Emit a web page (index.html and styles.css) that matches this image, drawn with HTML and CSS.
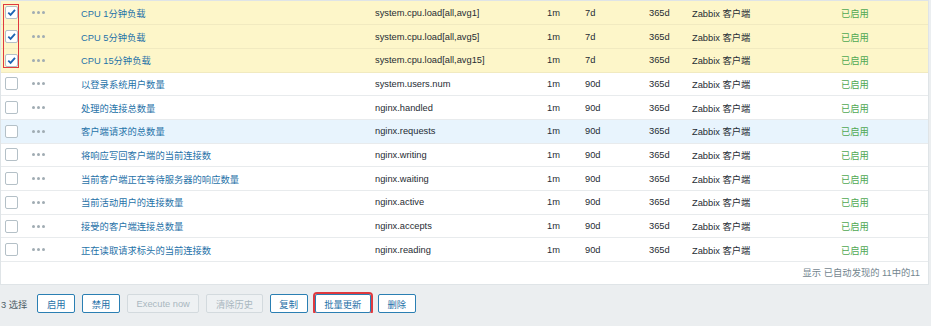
FILE: index.html
```html
<!DOCTYPE html>
<html lang="zh-CN">
<head>
  <meta charset="UTF-8" />
  <title>监控项</title>
  <link rel="stylesheet" href="styles.css">
</head>
<body>

  <div class="list">
    <div class="mark"></div>
    <table>
      <colgroup>
        <col class="c-check"><col class="c-wiz"><col class="c-name"><col class="c-key">
        <col class="c-int"><col class="c-hist"><col class="c-trend"><col class="c-type"><col class="c-status">
      </colgroup>
      <tbody>
        <tr class="sel">
          <td><span class="cb on"><svg viewBox="0 0 12 12"><path d="M2.5 6.2 L5 8.6 L9.8 3.2"/></svg></span></td>
          <td><span class="dots"><i></i><i></i><i></i></span></td>
          <td><a href="#">CPU 1分钟负载</a></td>
          <td>system.cpu.load[all,avg1]</td><td>1m</td><td>7d</td><td>365d</td><td>Zabbix 客户端</td>
          <td class="ok">已启用</td>
        </tr>
        <tr class="sel">
          <td><span class="cb on"><svg viewBox="0 0 12 12"><path d="M2.5 6.2 L5 8.6 L9.8 3.2"/></svg></span></td>
          <td><span class="dots"><i></i><i></i><i></i></span></td>
          <td><a href="#">CPU 5分钟负载</a></td>
          <td>system.cpu.load[all,avg5]</td><td>1m</td><td>7d</td><td>365d</td><td>Zabbix 客户端</td>
          <td class="ok">已启用</td>
        </tr>
        <tr class="sel">
          <td><span class="cb on"><svg viewBox="0 0 12 12"><path d="M2.5 6.2 L5 8.6 L9.8 3.2"/></svg></span></td>
          <td><span class="dots"><i></i><i></i><i></i></span></td>
          <td><a href="#">CPU 15分钟负载</a></td>
          <td>system.cpu.load[all,avg15]</td><td>1m</td><td>7d</td><td>365d</td><td>Zabbix 客户端</td>
          <td class="ok">已启用</td>
        </tr>
        <tr>
          <td><span class="cb"></span></td>
          <td><span class="dots"><i></i><i></i><i></i></span></td>
          <td><a href="#">以登录系统用户数量</a></td>
          <td>system.users.num</td><td>1m</td><td>90d</td><td>365d</td><td>Zabbix 客户端</td>
          <td class="ok">已启用</td>
        </tr>
        <tr>
          <td><span class="cb"></span></td>
          <td><span class="dots"><i></i><i></i><i></i></span></td>
          <td><a href="#">处理的连接总数量</a></td>
          <td>nginx.handled</td><td>1m</td><td>90d</td><td>365d</td><td>Zabbix 客户端</td>
          <td class="ok">已启用</td>
        </tr>
        <tr class="hover">
          <td><span class="cb"></span></td>
          <td><span class="dots"><i></i><i></i><i></i></span></td>
          <td><a href="#">客户端请求的总数量</a></td>
          <td>nginx.requests</td><td>1m</td><td>90d</td><td>365d</td><td>Zabbix 客户端</td>
          <td class="ok">已启用</td>
        </tr>
        <tr>
          <td><span class="cb"></span></td>
          <td><span class="dots"><i></i><i></i><i></i></span></td>
          <td><a href="#">将响应写回客户端的当前连接数</a></td>
          <td>nginx.writing</td><td>1m</td><td>90d</td><td>365d</td><td>Zabbix 客户端</td>
          <td class="ok">已启用</td>
        </tr>
        <tr>
          <td><span class="cb"></span></td>
          <td><span class="dots"><i></i><i></i><i></i></span></td>
          <td><a href="#">当前客户端正在等待服务器的响应数量</a></td>
          <td>nginx.waiting</td><td>1m</td><td>90d</td><td>365d</td><td>Zabbix 客户端</td>
          <td class="ok">已启用</td>
        </tr>
        <tr>
          <td><span class="cb"></span></td>
          <td><span class="dots"><i></i><i></i><i></i></span></td>
          <td><a href="#">当前活动用户的连接数量</a></td>
          <td>nginx.active</td><td>1m</td><td>90d</td><td>365d</td><td>Zabbix 客户端</td>
          <td class="ok">已启用</td>
        </tr>
        <tr>
          <td><span class="cb"></span></td>
          <td><span class="dots"><i></i><i></i><i></i></span></td>
          <td><a href="#">接受的客户端连接总数量</a></td>
          <td>nginx.accepts</td><td>1m</td><td>90d</td><td>365d</td><td>Zabbix 客户端</td>
          <td class="ok">已启用</td>
        </tr>
        <tr>
          <td><span class="cb"></span></td>
          <td><span class="dots"><i></i><i></i><i></i></span></td>
          <td><a href="#">正在读取请求标头的当前连接数</a></td>
          <td>nginx.reading</td><td>1m</td><td>90d</td><td>365d</td><td>Zabbix 客户端</td>
          <td class="ok">已启用</td>
        </tr>
      </tbody>
    </table>
    <div class="list-foot">显示 已自动发现的 11中的11</div>
  </div>

  <div class="actions">
    <span class="count">3 选择</span>
    <button>启用</button>
    <button>禁用</button>
    <button disabled>Execute now</button>
    <button disabled>清除历史</button>
    <button>复制</button>
    <button class="marked">批量更新</button>
    <button>删除</button>
  </div>

</body>
</html>
```

FILE: styles.css
```css
* { box-sizing: border-box; }

body {
  margin: 0;
  background: #ebeef0;
  font-family: "Liberation Sans", "Noto Sans CJK SC", sans-serif;
  font-size: 9.3px;
  color: #1f2c33;
}

.list {
  position: relative;
  width: 929px;
  background: white;
  border: 1px solid #dfe4e7;
}

/* red annotation round the checked boxes */
.mark {
  position: absolute;
  left: 2px;
  top: 3px;
  width: 16px;
  height: 64px;
  border: 1.5px solid #e0393e;
  z-index: 2;
}

table {
  width: 927px;
  border-collapse: collapse;
  table-layout: fixed;
}

.c-check { width: 30px; }
.c-wiz { width: 50px; }
.c-name { width: 294px; }
.c-key { width: 172px; }
.c-int { width: 38px; }
.c-hist { width: 64px; }
.c-trend { width: 43px; }
.c-type { width: 149px; }
.c-status { width: 87px; }

td {
  height: 23.7px;
  padding: 0;
  border-bottom: 1px solid #e8ebed;
  white-space: nowrap;
  vertical-align: middle;
}

td:first-child { padding-left: 4px; }

tr.sel td {
  background: #fdf6c9;
  border-bottom-color: #f1eac0;
}

tr.hover td { background: #e8f4fd; }

a {
  color: #1f72a8;
  text-decoration: none;
}

.ok { color: #4fa852; }

.cb {
  display: block;
  width: 13px;
  height: 13px;
  border: 1px solid #b4c0c7;
  border-radius: 2px;
  background: white;
}

.cb svg {
  display: block;
  width: 11px;
  height: 11px;
  fill: none;
  stroke: #1d64b3;
  stroke-width: 2;
}

.dots {
  display: flex;
  gap: 1.8px;
  padding-left: 1px;
}

.dots i {
  width: 3px;
  height: 3px;
  border-radius: 50%;
  background: #a0acb3;
}

.list-foot {
  height: 22px;
  line-height: 22px;
  text-align: right;
  padding-right: 8px;
  color: #73868f;
}

.actions {
  display: flex;
  align-items: center;
  gap: 7px;
  padding: 9px 0 0 1px;
}

.count {
  margin-right: 3px;
  color: #4f5f68;
}

.actions button {
  height: 19px;
  padding: 0 8.6px;
  font-family: inherit;
  font-size: 9.3px;
  color: #1f72a8;
  background: white;
  border: 1px solid #2a7fb3;
  border-radius: 2px;
}

.actions button:disabled {
  color: #a9b7bf;
  background: #eef1f3;
  border-color: #d3dade;
}

.actions button.marked {
  outline: 2px solid #e0393e;
  outline-offset: 0;
}
```
